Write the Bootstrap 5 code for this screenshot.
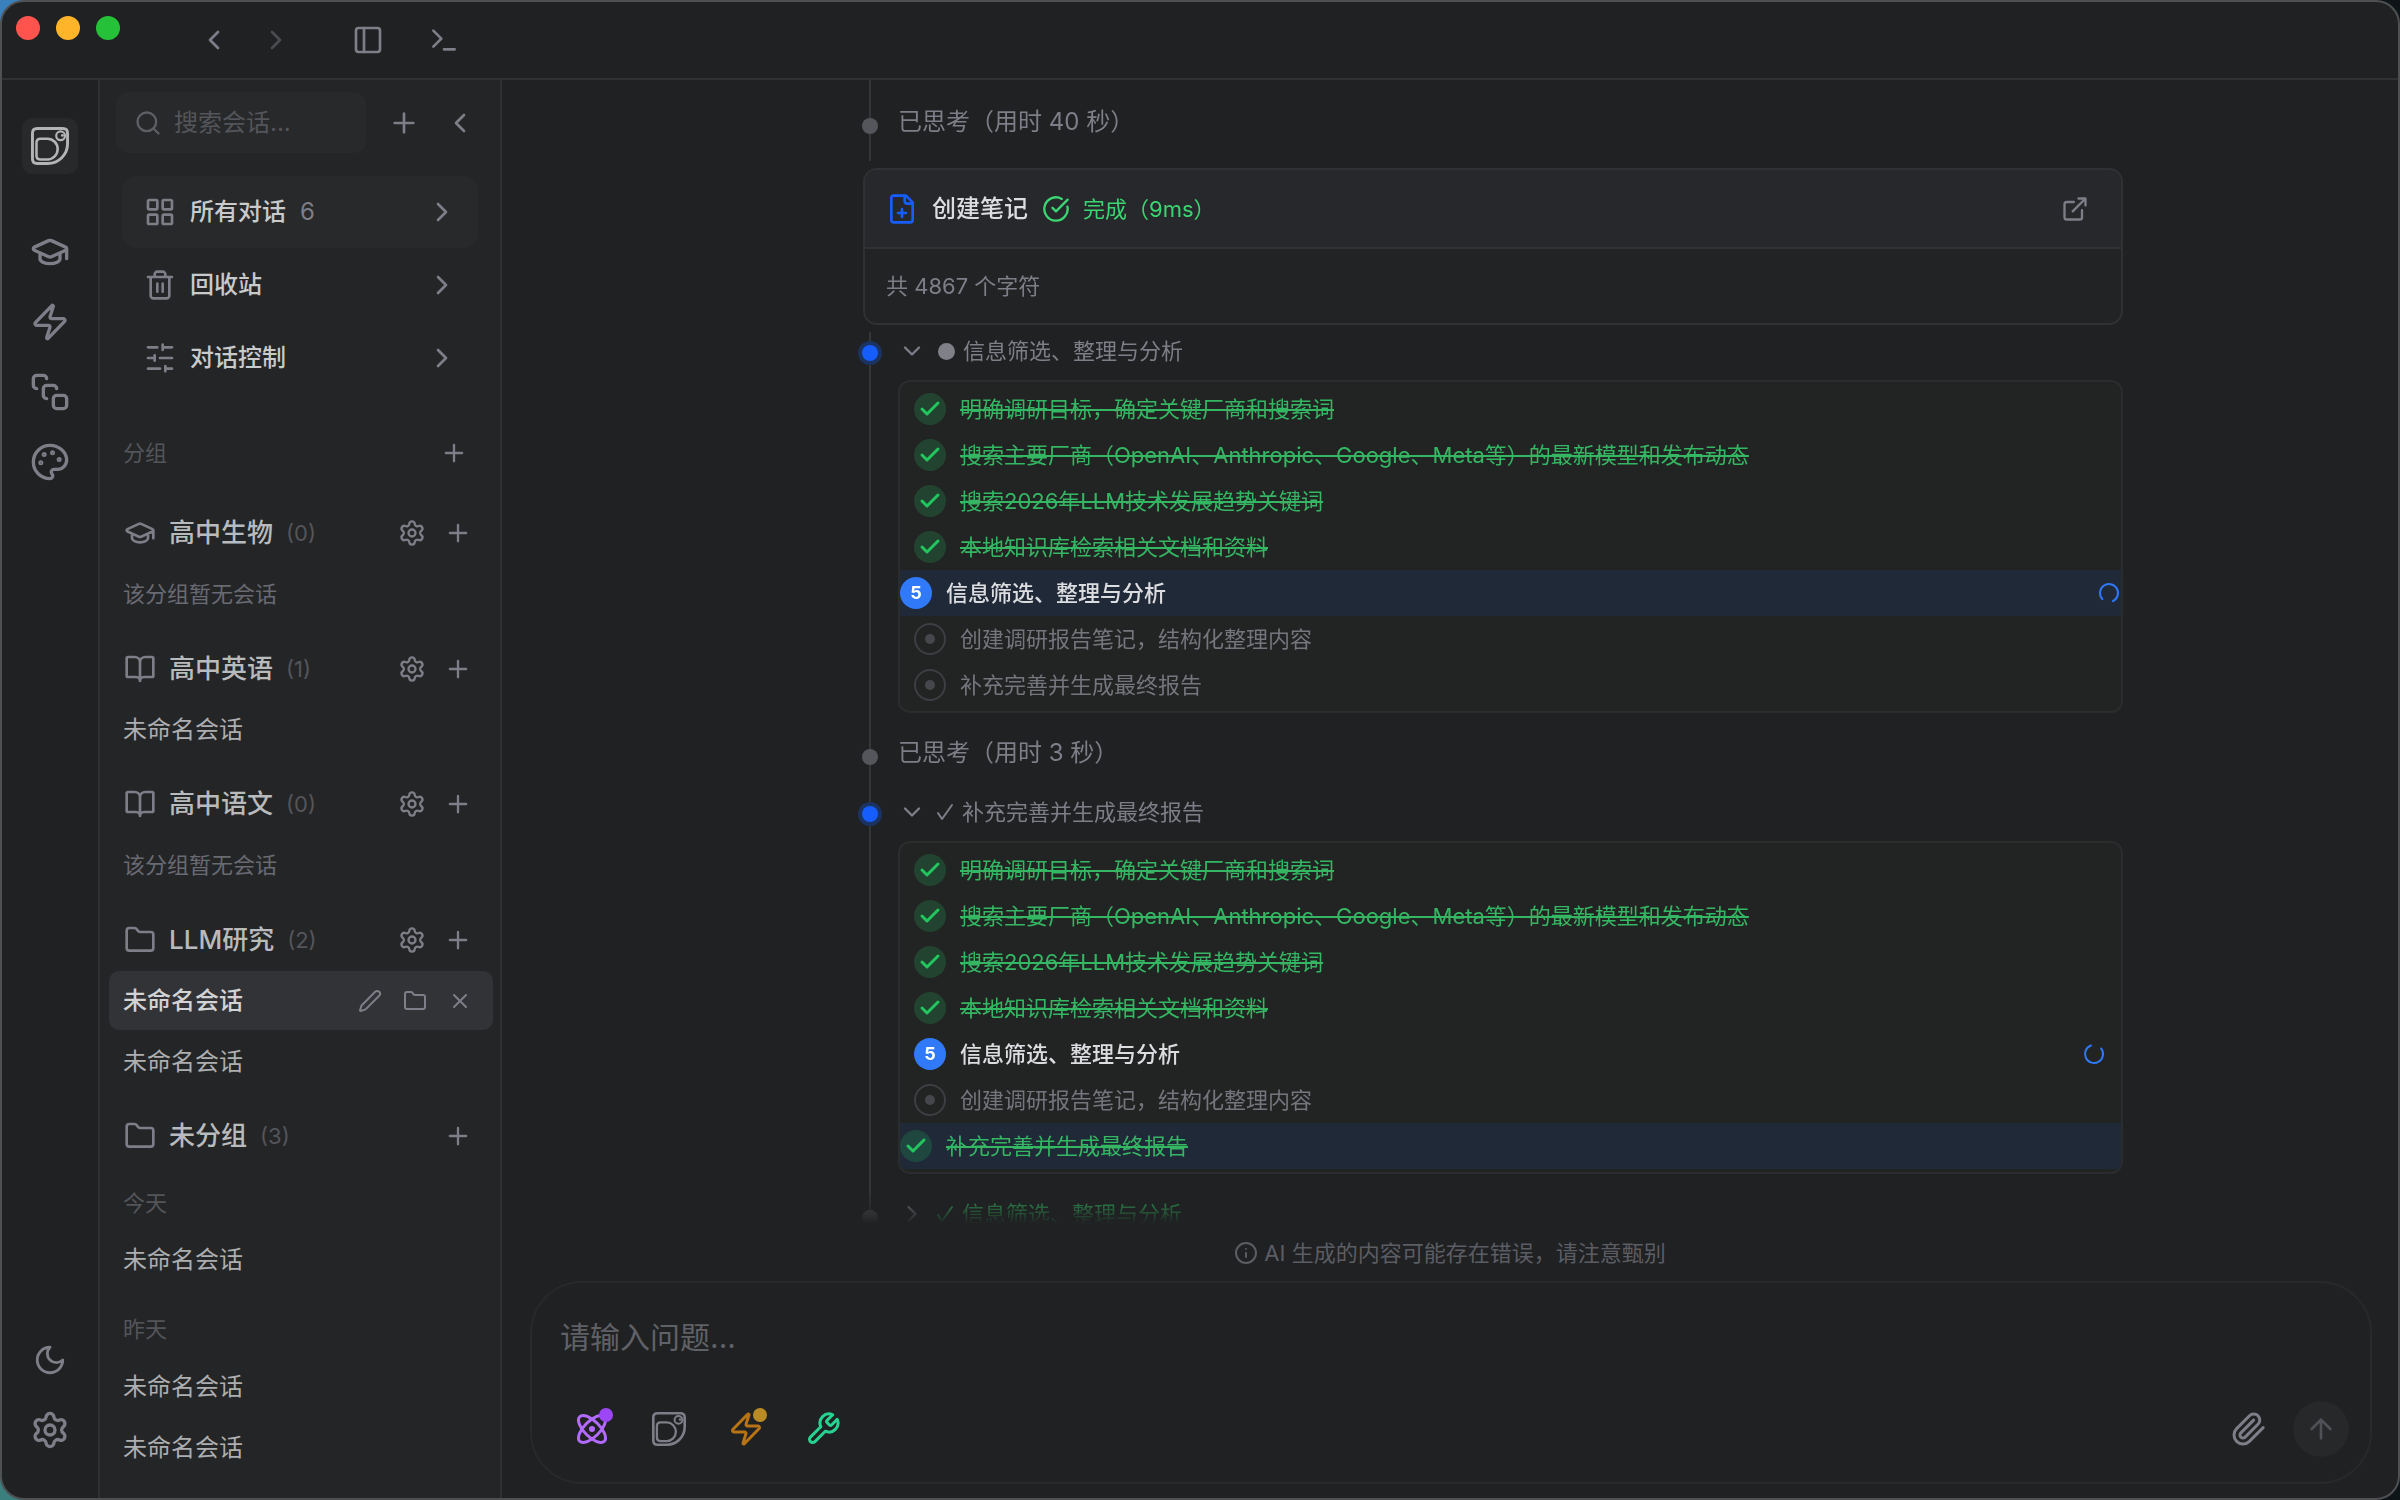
<!DOCTYPE html>
<html lang="zh-CN" data-bs-theme="dark">
<head>
<meta charset="utf-8">
<meta name="viewport" content="width=device-width, initial-scale=1">
<title>对话</title>
<link href="https://cdn.jsdelivr.net/npm/bootstrap@5.3.0/dist/css/bootstrap.min.css" rel="stylesheet">
<style>
:root{--bg:#202123;--panel:#242527;--raised:#28292b;--line:#303133;--mute:#7d7e87;--dim:#54555a;--blue:#155dfc;--green:#22c55e}
html{height:100%;background:linear-gradient(180deg,#3a80bd,#3c7f7f) 0 0/30px 100% no-repeat,#0e1519}
body{height:100%;margin:0;background:transparent;font-family:Inter,"Noto Sans CJK SC",sans-serif;font-size:22px;line-height:32px;color:#c9cacc}
.ico{width:32px;height:32px;flex:none;fill:none;stroke:currentColor;stroke-width:2;stroke-linecap:round;stroke-linejoin:round;display:block}
.ico-24{width:24px;height:24px}.ico-28{width:28px;height:28px}.ico-34{width:34px;height:34px}.ico-36{width:36px;height:36px}.ico-38{width:38px;height:38px}.ico-40{width:40px;height:40px}
.app{border:2px solid #4f5052;border-radius:24px;background:var(--bg)}
.titlebar{height:78px;border-bottom:2px solid var(--line);padding-left:14px}
.light{width:24px;height:24px;border-radius:50%;margin-top:14px}
.light-close{background:#ff544d}.light-min{background:#ffb429}.light-max{background:#25c138}
.history{margin-left:64px;gap:2px}
.views{margin-left:32px}
.tool{width:60px;height:60px;padding:0;border:0;background:none;color:var(--mute);display:flex;flex:none;align-items:center;justify-content:center;position:relative}
.tool-sm{width:46px;height:46px}
.tool-off{color:#4b4c50}
.rail{width:98px;border-right:2px solid var(--line);padding:38px 0}
.rail-set{gap:10px}
.rail-top{margin-top:48px}
.logo{width:56px;height:56px;border-radius:10px;background:var(--raised);color:#b3b4b6}
.side{width:402px;border-right:2px solid var(--line);background:var(--panel)}
.searchbar{padding:12px 12px 0 16px}
.searchbox{height:61px;border-radius:12px;background:var(--raised);padding:0 16px 0 18px;color:#5e5f65;margin-right:10px;gap:12px;min-width:0}
.searchbox input{background:none;border:0;outline:0;color:#c9cacc;font-size:24px;padding:0;width:100%;min-width:0}
.searchbox input::placeholder{color:var(--dim);opacity:1}
.searchbar .tool{width:56px}
.navlist{margin-top:23px}
.navrow{height:72px;margin:0 22px 1px;padding:0 20px 0 22px;border-radius:14px;font-size:24px;font-weight:500;color:#c9cacc;text-decoration:none}
.navrow span{margin-left:14px}
.navrow .total{font-weight:400;color:var(--mute)}
.navrow.on{background:var(--raised)}
.navrow svg{color:var(--mute)}
.seclabel{height:36px;margin:41px 0 32px;padding:0 23px;color:var(--dim)}
.seclabel .tool{height:36px;width:46px}
.side section{display:flex;flex-direction:column}
.ghead{height:60px;padding:0 19px 0 24px;font-size:26px;font-weight:500;color:#b9babc}
.ghead svg{color:var(--mute)}
.gname{margin:0 13px}
.gcount{font-size:22px;font-weight:400;color:var(--dim)}
.grp{margin-top:14px}
.empty{height:62px;padding-left:23px;color:#696a72}
.conv{height:59px;margin:1px 7px 1px 9px;padding:0 11px 0 14px;border-radius:10px;font-size:24px;color:#adaeb0;text-decoration:none}
.conv.on{background:#323337;color:#d2d3d5;font-weight:500}
.conv .tool{width:45px;height:45px}
.day{padding:14px 0 0 23px;color:var(--dim);height:66px;line-height:50px}
.day-first{padding-top:12px;height:63px}
.feed{-webkit-mask-image:linear-gradient(#000 calc(100% - 36px),transparent);mask-image:linear-gradient(#000 calc(100% - 36px),transparent)}
.feed,.chat{min-height:0;min-width:0}
.feedcol{max-width:1346px;padding-left:86px}
.trail{width:14px;flex:none;position:relative;margin-right:21px}
.trail::before{content:"";position:absolute;left:6px;top:0;bottom:0;width:2px;background:#353639}
.pt{width:16px;height:16px;border-radius:50%;background:#55565b;position:relative;margin:15px -1px 0}
.pt-on{background:var(--blue);box-shadow:0 0 0 4px #1b3361;margin-top:13px}
.think{font-size:24px;line-height:38px;color:var(--mute);padding-bottom:21px}
.step-first .trail,.step-first .think{padding-top:23px}
.step-first{height:81px}
.step-plan{padding-bottom:21px}
.shead{height:38px;color:var(--mute);background:none;border:0;padding:0}
.bullet{width:17px;height:17px;border-radius:50%;background:#7f8088;margin:0 8px 0 12px}
.shead .tick{width:18px;height:18px;margin:0 8px 0 10px}
.shead.done{color:#31b55e}
.shead.done .chev{color:var(--mute)}
.note{border:2px solid var(--line);border-radius:14px;background:#222325;margin:7px 0;overflow:hidden}
.note-h{height:79px;padding:0 32px 0 21px;background:#27282c;border-bottom:2px solid var(--line)}
.note-h .file{color:var(--blue)}
.note-title{font-size:24px;font-weight:500;color:#dcdde0;margin:0 14px}
.note-ok{color:#3bd671;gap:13px}
.note-h .tool{width:28px}
.note-b{height:74px;padding-left:21px;color:var(--mute)}
.plan{border:2px solid #2b2c2e;border-radius:12px;background:#222423;padding:4px 0 3px;margin:10px 0 0;list-style:none;overflow:hidden}
.task{height:46px;padding:0 15px 0 14px;color:#74757d}
.task.cur{background:#202938;padding:0}
.mk{width:32px;height:32px;border-radius:50%;flex:none;margin-right:14px;display:flex;align-items:center;justify-content:center}
.mk svg{stroke-width:3}
.ok{color:#34b663;text-decoration:line-through;text-decoration-thickness:2px}
.mk-ok{background:rgba(34,197,94,.2);color:var(--green)}
.mk-num{background:#3079f8;color:#fff;font-size:18px;font-weight:700}
.mk-wait{border:2px solid #3d3e43}
.mk-wait::after{content:"";width:10px;height:10px;border-radius:50%;background:#46474c}
.now{color:#dcdde0;font-weight:500}
.spin{color:#2f78f5}
.spin-a{transform:rotate(137deg)}.spin-b{transform:rotate(-38deg)}
.notice{height:57px;color:#5c5d63;gap:6px}
.composer{margin:0 26px 14px 28px;border:2px solid #28292b;border-radius:52px;padding:32px 21px 23px 28px}
.composer textarea{height:44px;font-size:30px;line-height:44px;background:none;border:0;outline:0;resize:none;padding:0;width:100%;color:#c9cacc;display:block;margin-bottom:40px;overflow:hidden}
.composer textarea::placeholder{color:#606167;opacity:1}
.modes{gap:17px;padding-left:2px}
.pip{position:absolute;width:14px;height:14px;border-radius:50%;left:37px;top:9px}
.t-think{color:#b36bff}.t-think .pip{background:#9d46f5}
.t-skill{color:#b87414}.t-skill .pip{background:#ba8a24}
.t-tools{color:#26d391}
.attach{margin-right:14px}
.send{width:56px;height:56px;border-radius:50%;background:#27282a;color:#505156}
</style>
<script src="https://cdn.jsdelivr.net/npm/bootstrap@5.3.0/dist/js/bootstrap.bundle.min.js" defer></script>
</head>
<body>
<svg class="d-none" aria-hidden="true">
<symbol id="left" viewBox="0 0 24 24"><path d="m15 18-6-6 6-6"/></symbol>
<symbol id="right" viewBox="0 0 24 24"><path d="m9 18 6-6-6-6"/></symbol>
<symbol id="down" viewBox="0 0 24 24"><path d="m6 9 6 6 6-6"/></symbol>
<symbol id="panel" viewBox="0 0 24 24"><rect width="18" height="18" x="3" y="3" rx="2"/><path d="M9 3v18"/></symbol>
<symbol id="term" viewBox="0 0 24 24"><path d="m4 17 6-6-6-6M12 19h8"/></symbol>
<symbol id="brand" viewBox="0 0 104 104"><g stroke-width="8"><path d="M17 4H87Q100 4 100 17V46A54 54 0 0 1 46 100H17Q4 100 4 87V17Q4 4 17 4Z"/><path stroke-width="7" d="M26 32H45A28 28.500 0 0 1 45 89H26Q15 89 15 78V43Q15 32 26 32Z"/><circle stroke-width="6" cx="81" cy="24" r="12"/><circle cx="86" cy="23" r="4" fill="currentColor" stroke="none"/></g></symbol>
<symbol id="cap" viewBox="0 0 24 24"><path d="M21.420 10.922a1 1 0 0 0-.019-1.838L12.830 5.180a2 2 0 0 0-1.660 0L2.600 9.080a1 1 0 0 0 0 1.832l8.570 3.908a2 2 0 0 0 1.660 0zM22 10v6M6 12.500V16a6 3 0 0 0 12 0v-3.500"/></symbol>
<symbol id="zap" viewBox="0 0 24 24"><path d="M4 14a1 1 0 0 1-.78-1.630l9.900-10.200a.5.5 0 0 1 .86.460l-1.920 6.020A1 1 0 0 0 13 10h7a1 1 0 0 1 .78 1.630l-9.900 10.200a.5.5 0 0 1-.86-.460l1.920-6.020A1 1 0 0 0 11 14z"/></symbol>
<symbol id="flow" viewBox="0 0 24 24"><path d="M4 10c-1.100 0-2-.9-2-2V4c0-1.100.9-2 2-2h4c1.100 0 2 .9 2 2M10 16c-1.100 0-2-.9-2-2v-4c0-1.100.9-2 2-2h4c1.100 0 2 .9 2 2"/><rect width="8" height="8" x="14" y="14" rx="2"/></symbol>
<symbol id="palette" viewBox="0 0 24 24"><g fill="currentColor"><circle cx="13.500" cy="6.500" r=".5"/><circle cx="17.500" cy="10.500" r=".5"/><circle cx="8.500" cy="7.500" r=".5"/><circle cx="6.500" cy="12.500" r=".5"/></g><path d="M12 2C6.500 2 2 6.500 2 12s4.500 10 10 10c.926 0 1.648-.746 1.648-1.688 0-.437-.18-.835-.437-1.125-.29-.289-.438-.652-.438-1.125a1.640 1.640 0 0 1 1.668-1.668h1.996c3.051 0 5.555-2.503 5.555-5.554C21.965 6.012 17.461 2 12 2z"/></symbol>
<symbol id="moon" viewBox="0 0 24 24"><path d="M12 3a6 6 0 0 0 9 9 9 9 0 1 1-9-9Z"/></symbol>
<symbol id="gear" viewBox="0 0 24 24"><path d="M9.671 4.136a2.340 2.340 0 0 1 4.659 0 2.340 2.340 0 0 0 3.319 1.915 2.340 2.340 0 0 1 2.330 4.033 2.340 2.340 0 0 0 0 3.831 2.340 2.340 0 0 1-2.330 4.033 2.340 2.340 0 0 0-3.319 1.915 2.340 2.340 0 0 1-4.659 0 2.340 2.340 0 0 0-3.320-1.915 2.340 2.340 0 0 1-2.330-4.033 2.340 2.340 0 0 0 0-3.831A2.340 2.340 0 0 1 6.350 6.051a2.340 2.340 0 0 0 3.319-1.915"/><circle cx="12" cy="12" r="3"/></symbol>
<symbol id="search" viewBox="0 0 24 24"><circle cx="11" cy="11" r="8"/><path d="m21 21-4.300-4.300"/></symbol>
<symbol id="plus" viewBox="0 0 24 24"><path d="M5 12h14M12 5v14"/></symbol>
<symbol id="grid" viewBox="0 0 24 24"><rect width="7" height="7" x="3" y="3" rx="1"/><rect width="7" height="7" x="14" y="3" rx="1"/><rect width="7" height="7" x="14" y="14" rx="1"/><rect width="7" height="7" x="3" y="14" rx="1"/></symbol>
<symbol id="trash" viewBox="0 0 24 24"><path d="M3 6h18M19 6v14c0 1-1 2-2 2H7c-1 0-2-1-2-2V6M8 6V4c0-1 1-2 2-2h4c1 0 2 1 2 2v2M10 11v6M14 11v6"/></symbol>
<symbol id="sliders" viewBox="0 0 24 24"><path d="M21 4h-7M10 4H3M21 12h-9M8 12H3M21 20h-5M12 20H3M14 2v4M8 10v4M16 18v4"/></symbol>
<symbol id="book" viewBox="0 0 24 24"><path d="M12 7v14M3 18a1 1 0 0 1-1-1V4a1 1 0 0 1 1-1h5a4 4 0 0 1 4 4 4 4 0 0 1 4-4h5a1 1 0 0 1 1 1v13a1 1 0 0 1-1 1h-6a3 3 0 0 0-3 3 3 3 0 0 0-3-3z"/></symbol>
<symbol id="folder" viewBox="0 0 24 24"><path d="M20 20a2 2 0 0 0 2-2V8a2 2 0 0 0-2-2h-7.900a2 2 0 0 1-1.690-.9L9.600 3.900A2 2 0 0 0 7.930 3H4a2 2 0 0 0-2 2v13a2 2 0 0 0 2 2Z"/></symbol>
<symbol id="pencil" viewBox="0 0 24 24"><path d="M21.174 6.812a1 1 0 0 0-3.986-3.987L3.842 16.174a2 2 0 0 0-.5.830l-1.321 4.352a.5.5 0 0 0 .623.622l4.353-1.320a2 2 0 0 0 .830-.497z"/></symbol>
<symbol id="x" viewBox="0 0 24 24"><path d="M18 6 6 18M6 6l12 12"/></symbol>
<symbol id="fileplus" viewBox="0 0 24 24"><path d="M15 2H6a2 2 0 0 0-2 2v16a2 2 0 0 0 2 2h12a2 2 0 0 0 2-2V7ZM14 2v4a2 2 0 0 0 2 2h4M9 15h6M12 12v6"/></symbol>
<symbol id="okring" viewBox="0 0 24 24"><path d="M21.801 10A10 10 0 1 1 17 3.335M9 11l3 3L22 4"/></symbol>
<symbol id="ext" viewBox="0 0 24 24"><path d="M15 3h6v6M10 14 21 3M18 13v6a2 2 0 0 1-2 2H5a2 2 0 0 1-2-2V8a2 2 0 0 1 2-2h6"/></symbol>
<symbol id="check" viewBox="0 0 24 24"><path d="M20 6 9 17l-5-5"/></symbol>
<symbol id="tick" viewBox="0 0 18 18"><path d="M2 10l4 6L16 2"/></symbol>
<symbol id="spin" viewBox="0 0 24 24"><path d="M21 12a9 9 0 1 1-6.219-8.560"/></symbol>
<symbol id="info" viewBox="0 0 24 24"><circle cx="12" cy="12" r="10"/><path d="M12 16v-4M12 8h.01"/></symbol>
<symbol id="atom" viewBox="0 0 24 24"><circle cx="12" cy="12" r="1"/><path d="M20.200 20.200c2.040-2.030.020-7.360-4.500-11.900-4.540-4.520-9.870-6.540-11.900-4.500-2.040 2.030-.020 7.360 4.500 11.900 4.540 4.520 9.870 6.540 11.900 4.500ZM15.700 15.700c4.520-4.540 6.540-9.870 4.500-11.900-2.030-2.040-7.360-.020-11.900 4.500-4.520 4.540-6.540 9.870-4.500 11.900 2.030 2.040 7.360.020 11.900-4.500Z"/></symbol>
<symbol id="wrench" viewBox="0 0 24 24"><path d="M14.700 6.300a1 1 0 0 0 0 1.400l1.600 1.600a1 1 0 0 0 1.400 0l3.770-3.770a6 6 0 0 1-7.940 7.940l-6.910 6.910a2.120 2.120 0 0 1-3-3l6.910-6.910a6 6 0 0 1 7.940-7.940l-3.760 3.760z"/></symbol>
<symbol id="clip" viewBox="0 0 24 24"><path d="m21.440 11.050-9.190 9.190a6 6 0 0 1-8.490-8.490l8.570-8.570A4 4 0 1 1 18 8.840l-8.590 8.570a2 2 0 0 1-2.830-2.830l8.490-8.480"/></symbol>
<symbol id="up" viewBox="0 0 24 24"><path d="m5 12 7-7 7 7M12 19V5"/></symbol>
</svg>

<div class="app vh-100 d-flex flex-column overflow-hidden">
  <header class="titlebar d-flex align-items-center flex-shrink-0">
    <div class="d-flex gap-3 align-self-start">
      <span class="light light-close"></span><span class="light light-min"></span><span class="light light-max"></span>
    </div>
    <div class="history d-flex">
      <button class="tool" aria-label="后退"><svg class="ico"><use href="#left"/></svg></button>
      <button class="tool tool-off" aria-label="前进"><svg class="ico"><use href="#right"/></svg></button>
    </div>
    <div class="views d-flex gap-3">
      <button class="tool" aria-label="侧栏"><svg class="ico"><use href="#panel"/></svg></button>
      <button class="tool" aria-label="终端"><svg class="ico"><use href="#term"/></svg></button>
    </div>
  </header>

  <div class="d-flex flex-grow-1 chat">
    <nav class="rail d-flex flex-column align-items-center flex-shrink-0">
      <button class="tool logo" aria-label="主页"><svg class="ico ico-38"><use href="#brand"/></svg></button>
      <div class="rail-set rail-top d-flex flex-column">
        <button class="tool" aria-label="学习"><svg class="ico ico-40"><use href="#cap"/></svg></button>
        <button class="tool" aria-label="技能"><svg class="ico ico-40"><use href="#zap"/></svg></button>
        <button class="tool" aria-label="流程"><svg class="ico ico-40"><use href="#flow"/></svg></button>
        <button class="tool" aria-label="主题"><svg class="ico ico-40"><use href="#palette"/></svg></button>
      </div>
      <div class="rail-set d-flex flex-column mt-auto">
        <button class="tool" aria-label="深色模式"><svg class="ico ico-34"><use href="#moon"/></svg></button>
        <button class="tool" aria-label="设置"><svg class="ico ico-40"><use href="#gear"/></svg></button>
      </div>
    </nav>

    <aside class="side flex-shrink-0 overflow-hidden">
      <div class="searchbar d-flex align-items-center">
        <label class="searchbox d-flex align-items-center flex-grow-1"><svg class="ico ico-28"><use href="#search"/></svg><input type="text" placeholder="搜索会话..." aria-label="搜索会话"></label>
        <button class="tool" aria-label="新建会话"><svg class="ico"><use href="#plus"/></svg></button>
        <button class="tool" aria-label="收起"><svg class="ico"><use href="#left"/></svg></button>
      </div>
      <div class="navlist">
        <a href="#" class="navrow on d-flex align-items-center"><svg class="ico"><use href="#grid"/></svg><span>所有对话</span><span class="total">6</span><svg class="ico ms-auto"><use href="#right"/></svg></a>
        <a href="#" class="navrow d-flex align-items-center"><svg class="ico"><use href="#trash"/></svg><span>回收站</span><svg class="ico ms-auto"><use href="#right"/></svg></a>
        <a href="#" class="navrow d-flex align-items-center"><svg class="ico"><use href="#sliders"/></svg><span>对话控制</span><svg class="ico ms-auto"><use href="#right"/></svg></a>
      </div>
      <div class="seclabel d-flex align-items-center justify-content-between"><span>分组</span><button class="tool" aria-label="新建分组"><svg class="ico ico-28"><use href="#plus"/></svg></button></div>

      <section>
        <div class="ghead d-flex align-items-center"><svg class="ico"><use href="#cap"/></svg><span class="gname">高中生物</span><span class="gcount">(0)</span><button class="tool tool-sm ms-auto" aria-label="设置"><svg class="ico ico-28"><use href="#gear"/></svg></button><button class="tool tool-sm" aria-label="新建"><svg class="ico ico-28"><use href="#plus"/></svg></button></div>
        <div class="empty d-flex align-items-center">该分组暂无会话</div>
      </section>
      <section class="grp">
        <div class="ghead d-flex align-items-center"><svg class="ico"><use href="#book"/></svg><span class="gname">高中英语</span><span class="gcount">(1)</span><button class="tool tool-sm ms-auto" aria-label="设置"><svg class="ico ico-28"><use href="#gear"/></svg></button><button class="tool tool-sm" aria-label="新建"><svg class="ico ico-28"><use href="#plus"/></svg></button></div>
        <a href="#" class="conv d-flex align-items-center">未命名会话</a>
      </section>
      <section class="grp">
        <div class="ghead d-flex align-items-center"><svg class="ico"><use href="#book"/></svg><span class="gname">高中语文</span><span class="gcount">(0)</span><button class="tool tool-sm ms-auto" aria-label="设置"><svg class="ico ico-28"><use href="#gear"/></svg></button><button class="tool tool-sm" aria-label="新建"><svg class="ico ico-28"><use href="#plus"/></svg></button></div>
        <div class="empty d-flex align-items-center">该分组暂无会话</div>
      </section>
      <section class="grp">
        <div class="ghead d-flex align-items-center"><svg class="ico"><use href="#folder"/></svg><span class="gname">LLM研究</span><span class="gcount">(2)</span><button class="tool tool-sm ms-auto" aria-label="设置"><svg class="ico ico-28"><use href="#gear"/></svg></button><button class="tool tool-sm" aria-label="新建"><svg class="ico ico-28"><use href="#plus"/></svg></button></div>
        <div class="conv on d-flex align-items-center"><a href="#" class="text-reset text-decoration-none me-auto">未命名会话</a><button class="tool" aria-label="重命名"><svg class="ico ico-24"><use href="#pencil"/></svg></button><button class="tool" aria-label="移动"><svg class="ico ico-24"><use href="#folder"/></svg></button><button class="tool" aria-label="删除"><svg class="ico ico-24"><use href="#x"/></svg></button></div>
        <a href="#" class="conv d-flex align-items-center">未命名会话</a>
      </section>
      <section class="grp">
        <div class="ghead d-flex align-items-center"><svg class="ico"><use href="#folder"/></svg><span class="gname">未分组</span><span class="gcount">(3)</span><button class="tool tool-sm ms-auto" aria-label="新建"><svg class="ico ico-28"><use href="#plus"/></svg></button></div>
        <div class="day day-first">今天</div>
        <a href="#" class="conv d-flex align-items-center">未命名会话</a>
        <div class="day">昨天</div>
        <a href="#" class="conv d-flex align-items-center">未命名会话</a>
        <a href="#" class="conv d-flex align-items-center">未命名会话</a>
      </section>
    </aside>

    <main class="chat flex-grow-1 d-flex flex-column">
      <div class="feed flex-grow-1 overflow-hidden">
        <div class="feedcol mx-auto">
          <div class="d-flex step-first"><div class="trail"><div class="pt"></div></div><div class="think">已思考（用时 40 秒）</div></div>

          <article class="note">
            <div class="note-h d-flex align-items-center">
              <svg class="ico file"><use href="#fileplus"/></svg>
              <span class="note-title">创建笔记</span>
              <span class="note-ok d-flex align-items-center"><svg class="ico ico-28"><use href="#okring"/></svg>完成（9ms）</span>
              <button class="tool ms-auto" aria-label="打开"><svg class="ico ico-28"><use href="#ext"/></svg></button>
            </div>
            <div class="note-b d-flex align-items-center">共 4867 个字符</div>
          </article>

          <div class="d-flex">
            <div class="trail"><div class="pt pt-on"></div></div>
            <div class="flex-grow-1 step-plan">
              <button class="shead d-flex align-items-center"><svg class="ico ico-28 chev"><use href="#down"/></svg><span class="bullet"></span>信息筛选、整理与分析</button>
              <ul class="plan">
                <li class="task d-flex align-items-center"><span class="mk mk-ok"><svg class="ico ico-24"><use href="#check"/></svg></span><span class="ok">明确调研目标，确定关键厂商和搜索词</span></li>
                <li class="task d-flex align-items-center"><span class="mk mk-ok"><svg class="ico ico-24"><use href="#check"/></svg></span><span class="ok">搜索主要厂商（OpenAI、Anthropic、Google、Meta等）的最新模型和发布动态</span></li>
                <li class="task d-flex align-items-center"><span class="mk mk-ok"><svg class="ico ico-24"><use href="#check"/></svg></span><span class="ok">搜索2026年LLM技术发展趋势关键词</span></li>
                <li class="task d-flex align-items-center"><span class="mk mk-ok"><svg class="ico ico-24"><use href="#check"/></svg></span><span class="ok">本地知识库检索相关文档和资料</span></li>
                <li class="task cur d-flex align-items-center"><span class="mk mk-num">5</span><span class="now">信息筛选、整理与分析</span><svg class="ico ico-24 spin spin-a ms-auto"><use href="#spin"/></svg></li>
                <li class="task d-flex align-items-center"><span class="mk mk-wait"></span>创建调研报告笔记，结构化整理内容</li>
                <li class="task d-flex align-items-center"><span class="mk mk-wait"></span>补充完善并生成最终报告</li>
              </ul>
            </div>
          </div>

          <div class="d-flex"><div class="trail"><div class="pt"></div></div><div class="think">已思考（用时 3 秒）</div></div>

          <div class="d-flex">
            <div class="trail"><div class="pt pt-on"></div></div>
            <div class="flex-grow-1 step-plan">
              <button class="shead d-flex align-items-center"><svg class="ico ico-28 chev"><use href="#down"/></svg><svg class="ico tick"><use href="#tick"/></svg>补充完善并生成最终报告</button>
              <ul class="plan">
                <li class="task d-flex align-items-center"><span class="mk mk-ok"><svg class="ico ico-24"><use href="#check"/></svg></span><span class="ok">明确调研目标，确定关键厂商和搜索词</span></li>
                <li class="task d-flex align-items-center"><span class="mk mk-ok"><svg class="ico ico-24"><use href="#check"/></svg></span><span class="ok">搜索主要厂商（OpenAI、Anthropic、Google、Meta等）的最新模型和发布动态</span></li>
                <li class="task d-flex align-items-center"><span class="mk mk-ok"><svg class="ico ico-24"><use href="#check"/></svg></span><span class="ok">搜索2026年LLM技术发展趋势关键词</span></li>
                <li class="task d-flex align-items-center"><span class="mk mk-ok"><svg class="ico ico-24"><use href="#check"/></svg></span><span class="ok">本地知识库检索相关文档和资料</span></li>
                <li class="task d-flex align-items-center"><span class="mk mk-num">5</span><span class="now">信息筛选、整理与分析</span><svg class="ico ico-24 spin spin-b ms-auto"><use href="#spin"/></svg></li>
                <li class="task d-flex align-items-center"><span class="mk mk-wait"></span>创建调研报告笔记，结构化整理内容</li>
                <li class="task cur d-flex align-items-center"><span class="mk mk-ok"><svg class="ico ico-24"><use href="#check"/></svg></span><span class="ok">补充完善并生成最终报告</span></li>
              </ul>
            </div>
          </div>

          <div class="d-flex"><div class="trail"><div class="pt"></div></div><button class="shead done d-flex align-items-center"><svg class="ico ico-28 chev"><use href="#right"/></svg><svg class="ico tick"><use href="#tick"/></svg>信息筛选、整理与分析</button></div>
        </div>
      </div>

      <div class="notice d-flex align-items-center justify-content-center flex-shrink-0"><svg class="ico ico-24"><use href="#info"/></svg>AI 生成的内容可能存在错误，请注意甄别</div>

      <form class="composer flex-shrink-0">
        <textarea rows="1" placeholder="请输入问题..." aria-label="请输入问题"></textarea>
        <div class="d-flex align-items-center">
          <div class="modes d-flex">
            <button type="button" class="tool t-think" aria-label="深度思考"><svg class="ico ico-36"><use href="#atom"/></svg><span class="pip"></span></button>
            <button type="button" class="tool" aria-label="模型"><svg class="ico ico-34"><use href="#brand"/></svg></button>
            <button type="button" class="tool t-skill" aria-label="技能"><svg class="ico ico-36"><use href="#zap"/></svg><span class="pip"></span></button>
            <button type="button" class="tool t-tools" aria-label="工具"><svg class="ico ico-36"><use href="#wrench"/></svg></button>
          </div>
          <button type="button" class="tool attach ms-auto" aria-label="附件"><svg class="ico ico-36"><use href="#clip"/></svg></button>
          <button type="submit" class="tool send" aria-label="发送"><svg class="ico"><use href="#up"/></svg></button>
        </div>
      </form>
    </main>
  </div>
</div>
</body>
</html>
